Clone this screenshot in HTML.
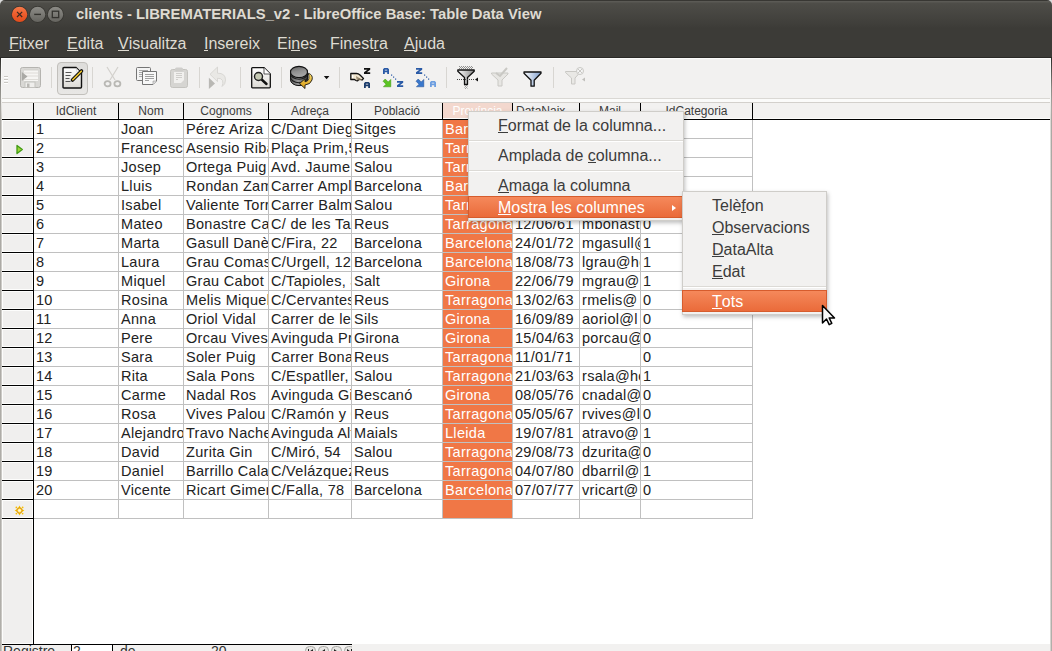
<!DOCTYPE html><html><head><meta charset="utf-8"><style>*{margin:0;padding:0;box-sizing:border-box}
html,body{width:1052px;height:651px;overflow:hidden;background:#dcdcdc}
body{font-family:"Liberation Sans",sans-serif;position:relative}
#win{position:absolute;left:0;top:0;width:1052px;height:651px;overflow:hidden;background:linear-gradient(transparent 0,transparent 28px,#fff 28px)}
.abs{position:absolute}
#titlebar{position:absolute;left:0;top:0;width:1052px;height:28px;background:linear-gradient(#383733 0px,#383733 1px,#5c5b56 1px,#5a5954 2px,#4e4d48 3px,#3e3d39 26px,#3c3b37 28px);border-radius:5px 5px 0 0}
#menubar{position:absolute;left:0;top:28px;width:1052px;height:30px;background:#3c3b37;border-bottom:1px solid #2a2926}
.wbtn{position:absolute;top:7px;width:16px;height:16px;border-radius:50%}
#title{position:absolute;left:76px;top:5px;font-weight:bold;font-size:14.8px;color:#dfdbd2;white-space:nowrap;line-height:18px}
.mi{position:absolute;top:35px;font-size:16px;color:#dfdbd2;line-height:18px;white-space:nowrap}
.mi u,.mt u{text-decoration:none;border-bottom:1px solid currentColor;display:inline-block;line-height:13px}
#toolbar{position:absolute;left:0;top:58px;width:1052px;height:40px;background:#f2f1f0;border-top:1px solid #fbfbfa}
.tsep{position:absolute;top:67px;width:1px;height:21px;background:#d5d3cf}
.ico{position:absolute}
#hsep1{position:absolute;left:0;top:98px;width:1052px;height:1px;background:#dad8d4}
#hsep2{position:absolute;left:0;top:99px;width:1052px;height:3px;background:#fbfbfa}
#hsep3{position:absolute;left:0;top:102px;width:1052px;height:1px;background:#d3d0cc}
#lborder{position:absolute;left:0;top:58px;width:1px;height:593px;background:linear-gradient(#2c2b28 0px,#8a8984 30px,#aaa8a3 50px,#b1afaa 100%)}
#lborder2{position:absolute;left:1px;top:58px;width:1px;height:593px;background:linear-gradient(#fbfbfa 0px,#f4f3f1 40px,#cfcdc9 60px,#c9c7c3 100%)}
#rborder{position:absolute;left:1051px;top:58px;width:1px;height:593px;background:linear-gradient(#2c2b28 0px,#8a8984 30px,#aaa8a3 50px,#b1afaa 100%)}
#rborder2{position:absolute;left:1050px;top:58px;width:1px;height:593px;background:linear-gradient(#fbfbfa 0px,#f4f3f1 40px,#dcdad6 60px,#d6d4d0 100%)}
.hdrbg{position:absolute;left:2px;top:103px;width:1048px;height:16px;background:#f2f1f0}
.hd{position:absolute;top:103px;height:16px;line-height:16px;font-size:12px;text-align:center;color:#3c3c3c;overflow:hidden;white-space:nowrap}
.hd.left{text-align:left;padding-left:3px}
.hd.sel{background:#f3d8ce;color:#fff}
.vl{position:absolute;width:1px}
.vl.blk{top:103px;height:17px;background:#000}
.vl.gry{top:120px;height:399px;background:#c0c0c0}
.hline{position:absolute;left:2px;top:119px;width:1048px;height:1px;background:#000}
.c{position:absolute;height:18px;line-height:18px;font-size:14.5px;letter-spacing:0.3px;padding-left:2px;overflow:hidden;white-space:nowrap;color:#222;background:#fff}
.c.sel{background:#f07746;color:#fff}
.hc{position:absolute;left:2px;width:31px;height:18px;background:#f0efee;border:1px solid #fdfdfc}
.rl{position:absolute;left:34px;width:718px;height:1px;background:#c0c0c0}
.hl{position:absolute;left:2px;width:31px;height:1px;background:#000}
#hcol{position:absolute;left:2px;top:120px;width:31px;height:524px;background:#f0efee}
#hcolline{position:absolute;left:33px;top:103px;width:1px;height:541px;background:#000}
#navline{position:absolute;left:2px;top:644px;width:350px;height:1px;background:#000}
#navbg{position:absolute;left:2px;top:644px;width:1048px;height:7px;background:#f2f1f0}
.menu{position:absolute;background:#f2f1f0;border:1px solid #cfcdc9;box-shadow:1px 2px 4px rgba(0,0,0,.25)}
.mt{position:absolute;font-size:16px;color:#3c3c3c;white-space:nowrap;line-height:18px}
.msep{position:absolute;height:2px;border-top:1px solid #dcdad6;border-bottom:1px solid #fff}
.mhl{position:absolute;background:linear-gradient(#f5895b,#ea6b3a);border:1px solid #d65c2d}

.navt{top:-2px;font-size:14px;line-height:16px;color:#333;white-space:nowrap}
</style></head><body><div id="win">
<div id="titlebar"></div>
<svg class="abs" style="left:0;top:0" width="80" height="28">
<defs>
<linearGradient id="gc" x1="0" y1="0" x2="0" y2="1"><stop offset="0" stop-color="#f47a4a"/><stop offset=".5" stop-color="#ee5c2c"/><stop offset="1" stop-color="#e04c1c"/></linearGradient>
<linearGradient id="gg" x1="0" y1="0" x2="0" y2="1"><stop offset="0" stop-color="#8c8b86"/><stop offset=".5" stop-color="#7a7974"/><stop offset="1" stop-color="#64635e"/></linearGradient>
</defs>
<circle cx="19.6" cy="14.4" r="8.4" fill="#35342f"/>
<circle cx="19.6" cy="14.4" r="7.7" fill="url(#gc)"/>
<path d="M17 11.8 L22.2 17 M22.2 11.8 L17 17" stroke="#3a2a22" stroke-width="1.2"/>
<circle cx="37.6" cy="14.4" r="8.4" fill="#35342f"/>
<circle cx="37.6" cy="14.4" r="7.7" fill="url(#gg)"/>
<path d="M34.2 14.4 H41" stroke="#34332f" stroke-width="1.4"/>
<circle cx="55.5" cy="14.4" r="8.4" fill="#35342f"/>
<circle cx="55.5" cy="14.4" r="7.7" fill="url(#gg)"/>
<rect x="52.3" y="11.2" width="6.4" height="6.4" fill="none" stroke="#34332f" stroke-width="1.3"/>
</svg>
<div id="title">clients - LIBREMATERIALS_v2 - LibreOffice Base: Table Data View</div>
<div id="menubar"></div>
<div class="mi" style="left:9px"><u>F</u>itxer</div>
<div class="mi" style="left:67px"><u>E</u>dita</div>
<div class="mi" style="left:118px"><u>V</u>isualitza</div>
<div class="mi" style="left:204px"><u>I</u>nsereix</div>
<div class="mi" style="left:277px">Ei<u>n</u>es</div>
<div class="mi" style="left:330px">Finest<u>r</u>a</div>
<div class="mi" style="left:404px"><u>A</u>juda</div>
<div id="toolbar"></div>
<svg class="abs" style="left:0;top:58px" width="600" height="40">
<defs>
<linearGradient id="docg" x1="0" y1="0" x2="0" y2="1"><stop offset="0" stop-color="#ffffff"/><stop offset="1" stop-color="#dcdad5"/></linearGradient>
<linearGradient id="btng" x1="0" y1="0" x2="0" y2="1"><stop offset="0" stop-color="#dedddb"/><stop offset="1" stop-color="#e8e7e5"/></linearGradient>
<linearGradient id="dbg" x1="0" y1="0" x2="1" y2="0"><stop offset="0" stop-color="#5a5a5a"/><stop offset=".45" stop-color="#9a9a9a"/><stop offset="1" stop-color="#3c3c3c"/></linearGradient>
<linearGradient id="fung" x1="0" y1="0" x2="1" y2="0"><stop offset="0" stop-color="#ffffff"/><stop offset="1" stop-color="#7f9fcf"/></linearGradient>
<linearGradient id="fung2" x1="0" y1="0" x2="1" y2="0"><stop offset="0" stop-color="#ffffff"/><stop offset="1" stop-color="#8a8a8a"/></linearGradient>
</defs>
<!-- grip y offsets relative to 58 -->
<g fill="#c9c7c2"><rect x="4" y="18" width="4" height="1"/><rect x="4" y="21" width="4" height="1"/><rect x="4" y="24" width="4" height="1"/></g>
<g fill="#ffffff"><rect x="4" y="19" width="4" height="1"/><rect x="4" y="22" width="4" height="1"/><rect x="4" y="25" width="4" height="1"/></g>
<!-- save disabled -->
<g transform="translate(20,9)">
<rect x="0.5" y="0.5" width="20" height="20" rx="2" fill="#d9d8d5" stroke="#b5b4b0"/>
<rect x="4" y="2" width="14" height="12" fill="#f6f5f3"/>
<rect x="4" y="2" width="14" height="1.5" fill="#d4d3cf"/>
<rect x="4" y="5.5" width="14" height="1" fill="#dedcd8"/>
<rect x="4" y="8.5" width="14" height="1" fill="#dedcd8"/>
<rect x="4" y="12" width="14" height="1" fill="#dedcd8"/>
<path d="M1.8 5 L7.5 9.5 L1.8 14 Z" fill="#aaa9a5"/>
<rect x="5" y="15" width="10" height="5.5" fill="#efeeec" stroke="#c4c3bf" stroke-width="1"/>
<rect x="7" y="16.5" width="2.5" height="4" fill="#b9b8b4"/>
</g>
<rect x="51" y="9" width="1" height="21" fill="#d8d6d2"/>
<!-- pressed button -->
<rect x="57.5" y="4.5" width="30" height="32" rx="3.5" fill="url(#btng)" stroke="#c2c0bc"/>
<!-- edit doc -->
<g transform="translate(62,9)">
<path d="M1 1.5 Q1 0.5 2 0.5 H14 L19.5 6 V20 Q19.5 21 18.5 21 H2 Q1 21 1 20 Z" fill="url(#docg)" stroke="#111" stroke-width="1.4"/>
<g fill="#555"><rect x="3.5" y="5" width="6" height="1"/><rect x="3.5" y="8" width="5" height="1"/><rect x="3.5" y="11" width="4" height="1"/><rect x="3.5" y="14" width="5" height="1"/></g>
<path d="M14 1 L19 6 L15 5 Z" fill="#fff" stroke="#bbb" stroke-width=".5"/><path d="M10.5 13 L19.5 4" stroke="#111" stroke-width="3.6" stroke-linecap="round"/><path d="M10.8 12.7 L19.3 4.2" stroke="#f2c82a" stroke-width="1.6" stroke-linecap="round"/>
</g>
<rect x="92" y="9" width="1" height="21" fill="#d8d6d2"/>
<!-- scissors disabled -->
<g transform="translate(104,9)" fill="none">
<path d="M3 0 L11 13 M14 0 L6 13" stroke="#d2d0cc" stroke-width="1.2"/>
<ellipse cx="3.6" cy="16.8" rx="3" ry="2.6" stroke="#b9b8b4" stroke-width="1.8"/><ellipse cx="13.4" cy="16.8" rx="3" ry="2.6" stroke="#b9b8b4" stroke-width="1.8"/>
</g>
<!-- copy -->
<g transform="translate(136,9)">
<rect x="0.5" y="0.5" width="14" height="13" rx="1" fill="#f4f4f4" stroke="#757575"/>
<g fill="#a8a8a8"><rect x="3" y="3" width="9" height="1"/><rect x="3" y="5" width="9" height="1"/><rect x="3" y="7" width="9" height="1"/><rect x="3" y="9" width="5" height="1"/></g>
<path d="M6.5 4.5 H20.5 V14 L17 17.5 H6.5 Z" fill="#f8f8f8" stroke="#757575"/>
<path d="M17 17.5 V14 H20.5" fill="#ddd" stroke="#999" stroke-width=".6"/>
<g fill="#a0a0a0"><rect x="9" y="7" width="9" height="1"/><rect x="9" y="9" width="9" height="1"/><rect x="9" y="11" width="9" height="1"/><rect x="9" y="13" width="4" height="1"/></g>
</g>
<!-- paste disabled -->
<g transform="translate(170,9)">
<rect x="0.5" y="2.5" width="17" height="18" rx="2" fill="#d6d5d2" stroke="#c4c3bf"/>
<rect x="5" y="0.5" width="8" height="4" rx="1.5" fill="#cfcecb"/>
<path d="M4 5 H14 V13 L11 16 H4 Z" fill="#f1f0ee"/>
<g fill="#cfcecb"><rect x="6" y="6" width="6" height="1"/><rect x="6" y="8" width="6" height="1"/><rect x="6" y="10" width="6" height="1"/><rect x="6" y="12" width="2" height="1"/></g>
</g>
<rect x="199" y="9" width="1" height="21" fill="#d8d6d2"/>
<!-- undo disabled -->
<g transform="translate(208,9)">
<path d="M0.9 10.8 L7 16.4 L0.9 21.9 Z" fill="#b9b8b4"/>
<path d="M2 7.3 L9.5 0 V6.2 Q17.5 6 17.5 13 Q17.5 17.5 14 19.5 Q15.5 16 14.5 13.5 Q13.5 11.2 9.5 11.2 V14.6 Z" fill="#e9e8e5" stroke="#d3d2ce" stroke-width="0.8" stroke-linejoin="round"/>
</g>
<rect x="240" y="9" width="1" height="21" fill="#d8d6d2"/>
<!-- search doc -->
<g transform="translate(251,9)">
<path d="M0.7 1.5 Q0.7 0.7 1.5 0.7 H13 L19.3 7 V20 Q19.3 20.8 18.5 20.8 H1.5 Q0.7 20.8 0.7 20 Z" fill="url(#docg)" stroke="#111" stroke-width="1.3"/>
<path d="M13 0.7 V7 H19.3" fill="#fff" stroke="#333" stroke-width="0.8"/>
<path d="M9 11 L15.5 17" stroke="#111" stroke-width="2.4" stroke-linecap="round"/>
<circle cx="7.5" cy="9.5" r="4" fill="#c7cbb5" stroke="#222" stroke-width="1.4"/>
</g>
<rect x="281" y="9" width="1" height="21" fill="#d8d6d2"/>
<!-- database -->
<defs>
<linearGradient id="dbtop" x1="0" y1="0" x2="0.3" y2="1"><stop offset="0" stop-color="#5e5e5e"/><stop offset=".5" stop-color="#8e8e8e"/><stop offset="1" stop-color="#a8a8a8"/></linearGradient>
<linearGradient id="arrg" x1="0" y1="0" x2="0" y2="1"><stop offset="0" stop-color="#f8dc70"/><stop offset="1" stop-color="#d89a10"/></linearGradient>
</defs>
<g transform="translate(290,8)">
<path d="M0.5 6 V13.8 A8.5 5.8 0 0 0 17.5 13.8 V6 Z" fill="url(#dbg)" stroke="#111" stroke-width="1"/>
<path d="M0.5 7.4 A8.5 5.8 0 0 0 17.5 7.4 M0.5 10.9 A8.5 5.8 0 0 0 17.5 10.9" fill="none" stroke="#1a1a1a" stroke-width="1.1"/>
<ellipse cx="9" cy="6" rx="8.5" ry="5.6" fill="url(#dbtop)" stroke="#111" stroke-width="1.1"/>
<path d="M18.2 7.2 Q23.5 9 22 14 Q20.5 18.5 15 19 L15 22.5 L9.6 17.6 L15 12.8 L15 15.8 Q18.2 15.4 18.8 12.6 Q19.3 10 18.2 7.2 Z" fill="url(#arrg)" stroke="#1a1a1a" stroke-width="0.9" stroke-linejoin="round"/>
</g>
<path d="M323.8 76 H329.4 L326.6 79.2 Z" transform="translate(0,-58)" fill="#111"/>
<rect x="339" y="9" width="1" height="21" fill="#d8d6d2"/>
<!-- sort -->
<defs>
<path id="lA" d="M0 6 V1.2 L1.2 0 H4.8 L6 1.2 V6 H4.2 V4.2 H1.8 V6 Z M1.8 1.8 V2.6 H4.2 V1.8 Z" fill-rule="evenodd"/>
<path id="lZ" d="M0 0 H6.2 V1.8 L2.8 4.2 H6.2 V6 H0 V4.2 L3.4 1.8 H0 Z"/>
<path id="arr" d="M0 2.2 L2.2 0 L5.2 3 L7.8 0.4 V7.8 H0.4 L3 5.2 Z"/>
</defs>
<g transform="translate(350,10)">
<path d="M0.8 5.5 H6.5 Q8.5 5.5 10 7 L13.5 10.5 L12 12 L9 11 Q8 13.5 6 12.5 L4.5 11.5 H0.8 Z" fill="#f1e6cf" stroke="#111" stroke-width="1.3" stroke-linejoin="round"/>
<rect x="2" y="7" width="1.3" height="3" fill="#fff"/>
<path d="M6 8 L12.5 12 L9 12.5 L6.5 11.5 Z" fill="#8a7a60" opacity=".8"/>
<use href="#lZ" x="14" y="0" fill="#111"/>
<use href="#lA" x="14" y="14" fill="#1c3c6c"/>
</g>
<!-- sort az -->
<g transform="translate(383,10)">
<use href="#lA" x="0" y="0" fill="#2a5aa6"/>
<use href="#arr" x="0" y="11" fill="#5cc422" stroke="#3a9010" stroke-width="0.5"/>
<g fill="#2a5aa6"><rect x="8" y="6.5" width="1.2" height="1.2"/><rect x="10" y="8.5" width="1.2" height="1.2"/><rect x="12" y="10.5" width="1.2" height="1.2"/></g>
<use href="#lZ" x="14" y="13" fill="#2a5aa6"/>
</g>
<!-- sort za -->
<g transform="translate(416,10)">
<use href="#lZ" x="0" y="0" fill="#2a5aa6"/>
<use href="#arr" x="0" y="11" fill="#3a78cc" stroke="#1e4a90" stroke-width="0.5"/>
<g fill="#2a5aa6"><rect x="8" y="6.5" width="1.2" height="1.2"/><rect x="10" y="8.5" width="1.2" height="1.2"/><rect x="12" y="10.5" width="1.2" height="1.2"/></g>
<use href="#lA" x="14" y="13" fill="#6d9ee0"/>
</g>
<rect x="446" y="9" width="1" height="21" fill="#d8d6d2"/>
<!-- autofilter -->
<defs><pattern id="chk" width="2" height="2" patternUnits="userSpaceOnUse"><rect width="1" height="1" fill="#666"/><rect x="1" y="1" width="1" height="1" fill="#666"/></pattern></defs>
<g transform="translate(457,8)">
<rect x="2" y="0" width="14" height="3" fill="url(#chk)" opacity=".7"/>
<path d="M0.8 4 H17.2 V5.2 L10.5 11.5 V18.5 H7.5 V11.5 L0.8 5.2 Z" fill="url(#fung2)" stroke="#111" stroke-width="1.3" stroke-linejoin="round"/>
<path d="M0 13.5 H17" stroke="#444" stroke-width="1" stroke-dasharray="1 1"/>
<path d="M21 11.5 L18 13.5 L21 15.5 Z" fill="#111"/>
<rect x="7.5" y="19" width="3" height="4" fill="url(#chk)" opacity=".6"/>
</g>
<!-- disabled filter -->
<g transform="translate(491,9)">
<path d="M0.5 6 H17 V7 L11 13 V19 H7 V13 L0.5 7 Z" fill="#e7e6e3" stroke="#c9c8c4" stroke-width="1"/>
<path d="M5 6 L9 9 L16 1" stroke="#c9c8c4" stroke-width="2" fill="none"/>
</g>
<!-- standard filter -->
<g transform="translate(523,13)">
<path d="M1 1 H18 V2.2 L11.2 9.3 V15.2 H8 V9.3 L1 2.2 Z" fill="url(#fung)" stroke="#111" stroke-width="1.3" stroke-linejoin="round"/>
</g>
<rect x="553" y="9" width="1" height="21" fill="#d8d6d2"/>
<!-- remove filter disabled -->
<g transform="translate(565,10)">
<path d="M0.5 3.5 H15 V4.5 L10 10 V16 H6.5 V10 L0.5 4.5 Z" fill="#e9e8e5" stroke="#c9c8c4" stroke-width="1"/>
<circle cx="15" cy="3" r="3.5" fill="#f5f5f5" stroke="#c9c8c4"/>
<path d="M13 1 L17 5 M17 1 L13 5" stroke="#c9c8c4" stroke-width="1"/>
<path d="M20 9.5 L17 11.5 L20 13.5 Z" fill="#c0bfbb"/>
</g>
</svg>
<div id="hsep1"></div><div id="hsep2"></div><div id="hsep3"></div>
<div id="lborder"></div><div id="lborder2"></div><div id="rborder"></div><div id="rborder2"></div>
<div id="hcol"></div><div id="hcolline"></div>
<div id="navbg"></div><div id="navline"></div>
<div class="abs" style="left:2px;top:645px;width:350px;height:6px;overflow:hidden">
<div class="abs" style="left:0;top:0;width:69px;height:6px;background:#f0efee"></div>
<div class="abs" style="left:69px;top:0;width:1px;height:6px;background:#000"></div>
<div class="abs" style="left:70px;top:0;width:40px;height:6px;background:#fff"></div>
<div class="abs" style="left:110px;top:0;width:1px;height:6px;background:#000"></div>
<div class="abs navt" style="left:1px">Registre</div>
<div class="abs navt" style="left:71px">2</div>
<div class="abs navt" style="left:118px">de</div>
<div class="abs navt" style="left:209px">20</div>
<svg class="abs" style="left:303px;top:1px" width="47" height="12">
<g fill="#e6e5e2" stroke="#a9a8a4" stroke-width="1"><rect x="0.5" y="0.5" width="10" height="10" rx="4"/><rect x="13.5" y="0.5" width="10" height="10" rx="4"/><rect x="26.5" y="0.5" width="10" height="10" rx="4"/><rect x="39.5" y="0.5" width="10" height="10" rx="4"/></g>
<g fill="#222"><rect x="3" y="3" width="1" height="5"/><path d="M8 3 L4.5 5.5 L8 8 Z"/><path d="M20 3 L16.5 5.5 L20 8 Z"/><path d="M29 3 L32.5 5.5 L29 8 Z"/><path d="M42 3 L45.5 5.5 L42 8 Z"/><rect x="46" y="3" width="1" height="5"/></g>
</svg>
</div>

<div id="grid"><div class="hdrbg"></div><div class="hd" style="left:34px;width:84px">IdClient</div><div class="hd" style="left:119px;width:64px">Nom</div><div class="hd" style="left:184px;width:84px">Cognoms</div><div class="hd" style="left:269px;width:82px">Adreça</div><div class="hd" style="left:352px;width:90px">Població</div><div class="hd sel" style="left:443px;width:69px">Província</div><div class="hd left" style="left:513px;width:66px">DataNaix</div><div class="hd" style="left:580px;width:60px">Mail</div><div class="hd" style="left:641px;width:111px">IdCategoria</div><div class="abs" style="left:2px;top:118px;width:1048px;height:1px;background:#fcfcfb"></div><div class="vl blk" style="left:33px"></div><div class="vl blk" style="left:118px"></div><div class="vl blk" style="left:183px"></div><div class="vl blk" style="left:268px"></div><div class="vl blk" style="left:351px"></div><div class="vl blk" style="left:442px"></div><div class="vl blk" style="left:512px"></div><div class="vl blk" style="left:579px"></div><div class="vl blk" style="left:640px"></div><div class="vl blk" style="left:752px"></div><div class="hline"></div><div class="c" style="left:34px;top:120px;width:84px">1</div><div class="c" style="left:119px;top:120px;width:64px">Joan</div><div class="c" style="left:184px;top:120px;width:84px">Pérez Ariza</div><div class="c" style="left:269px;top:120px;width:82px">C/Dant Diego</div><div class="c" style="left:352px;top:120px;width:90px">Sitges</div><div class="c sel" style="left:443px;top:120px;width:69px">Barcelona</div><div class="c" style="left:513px;top:120px;width:66px"></div><div class="c" style="left:580px;top:120px;width:60px"></div><div class="c" style="left:641px;top:120px;width:111px"></div><div class="hc" style="top:120px"></div><div class="rl" style="top:138px"></div><div class="hl" style="top:138px"></div><div class="c" style="left:34px;top:139px;width:84px">2</div><div class="c" style="left:119px;top:139px;width:64px">Francesc</div><div class="c" style="left:184px;top:139px;width:84px">Asensio Ribas</div><div class="c" style="left:269px;top:139px;width:82px">Plaça Prim,5</div><div class="c" style="left:352px;top:139px;width:90px">Reus</div><div class="c sel" style="left:443px;top:139px;width:69px">Tarragona</div><div class="c" style="left:513px;top:139px;width:66px"></div><div class="c" style="left:580px;top:139px;width:60px"></div><div class="c" style="left:641px;top:139px;width:111px"></div><div class="hc" style="top:139px"></div><div class="rl" style="top:157px"></div><div class="hl" style="top:157px"></div><div class="c" style="left:34px;top:158px;width:84px">3</div><div class="c" style="left:119px;top:158px;width:64px">Josep</div><div class="c" style="left:184px;top:158px;width:84px">Ortega Puig</div><div class="c" style="left:269px;top:158px;width:82px">Avd. Jaume I</div><div class="c" style="left:352px;top:158px;width:90px">Salou</div><div class="c sel" style="left:443px;top:158px;width:69px">Tarragona</div><div class="c" style="left:513px;top:158px;width:66px"></div><div class="c" style="left:580px;top:158px;width:60px"></div><div class="c" style="left:641px;top:158px;width:111px"></div><div class="hc" style="top:158px"></div><div class="rl" style="top:176px"></div><div class="hl" style="top:176px"></div><div class="c" style="left:34px;top:177px;width:84px">4</div><div class="c" style="left:119px;top:177px;width:64px">Lluis</div><div class="c" style="left:184px;top:177px;width:84px">Rondan Zamora</div><div class="c" style="left:269px;top:177px;width:82px">Carrer Ample</div><div class="c" style="left:352px;top:177px;width:90px">Barcelona</div><div class="c sel" style="left:443px;top:177px;width:69px">Barcelona</div><div class="c" style="left:513px;top:177px;width:66px"></div><div class="c" style="left:580px;top:177px;width:60px"></div><div class="c" style="left:641px;top:177px;width:111px"></div><div class="hc" style="top:177px"></div><div class="rl" style="top:195px"></div><div class="hl" style="top:195px"></div><div class="c" style="left:34px;top:196px;width:84px">5</div><div class="c" style="left:119px;top:196px;width:64px">Isabel</div><div class="c" style="left:184px;top:196px;width:84px">Valiente Torres</div><div class="c" style="left:269px;top:196px;width:82px">Carrer Balmes</div><div class="c" style="left:352px;top:196px;width:90px">Salou</div><div class="c sel" style="left:443px;top:196px;width:69px">Tarragona</div><div class="c" style="left:513px;top:196px;width:66px"></div><div class="c" style="left:580px;top:196px;width:60px"></div><div class="c" style="left:641px;top:196px;width:111px"></div><div class="hc" style="top:196px"></div><div class="rl" style="top:214px"></div><div class="hl" style="top:214px"></div><div class="c" style="left:34px;top:215px;width:84px">6</div><div class="c" style="left:119px;top:215px;width:64px">Mateo</div><div class="c" style="left:184px;top:215px;width:84px">Bonastre Casas</div><div class="c" style="left:269px;top:215px;width:82px">C/ de les Tapies</div><div class="c" style="left:352px;top:215px;width:90px">Reus</div><div class="c sel" style="left:443px;top:215px;width:69px">Tarragona</div><div class="c" style="left:513px;top:215px;width:66px">12/06/61</div><div class="c" style="left:580px;top:215px;width:60px">mbonastre</div><div class="c" style="left:641px;top:215px;width:111px">0</div><div class="hc" style="top:215px"></div><div class="rl" style="top:233px"></div><div class="hl" style="top:233px"></div><div class="c" style="left:34px;top:234px;width:84px">7</div><div class="c" style="left:119px;top:234px;width:64px">Marta</div><div class="c" style="left:184px;top:234px;width:84px">Gasull Danès</div><div class="c" style="left:269px;top:234px;width:82px">C/Fira, 22</div><div class="c" style="left:352px;top:234px;width:90px">Barcelona</div><div class="c sel" style="left:443px;top:234px;width:69px">Barcelona</div><div class="c" style="left:513px;top:234px;width:66px">24/01/72</div><div class="c" style="left:580px;top:234px;width:60px">mgasull@</div><div class="c" style="left:641px;top:234px;width:111px">1</div><div class="hc" style="top:234px"></div><div class="rl" style="top:252px"></div><div class="hl" style="top:252px"></div><div class="c" style="left:34px;top:253px;width:84px">8</div><div class="c" style="left:119px;top:253px;width:64px">Laura</div><div class="c" style="left:184px;top:253px;width:84px">Grau Comas</div><div class="c" style="left:269px;top:253px;width:82px">C/Urgell, 12</div><div class="c" style="left:352px;top:253px;width:90px">Barcelona</div><div class="c sel" style="left:443px;top:253px;width:69px">Barcelona</div><div class="c" style="left:513px;top:253px;width:66px">18/08/73</div><div class="c" style="left:580px;top:253px;width:60px">lgrau@hot</div><div class="c" style="left:641px;top:253px;width:111px">1</div><div class="hc" style="top:253px"></div><div class="rl" style="top:271px"></div><div class="hl" style="top:271px"></div><div class="c" style="left:34px;top:272px;width:84px">9</div><div class="c" style="left:119px;top:272px;width:64px">Miquel</div><div class="c" style="left:184px;top:272px;width:84px">Grau Cabot</div><div class="c" style="left:269px;top:272px;width:82px">C/Tapioles, 3</div><div class="c" style="left:352px;top:272px;width:90px">Salt</div><div class="c sel" style="left:443px;top:272px;width:69px">Girona</div><div class="c" style="left:513px;top:272px;width:66px">22/06/79</div><div class="c" style="left:580px;top:272px;width:60px">mgrau@</div><div class="c" style="left:641px;top:272px;width:111px">1</div><div class="hc" style="top:272px"></div><div class="rl" style="top:290px"></div><div class="hl" style="top:290px"></div><div class="c" style="left:34px;top:291px;width:84px">10</div><div class="c" style="left:119px;top:291px;width:64px">Rosina</div><div class="c" style="left:184px;top:291px;width:84px">Melis Miquel</div><div class="c" style="left:269px;top:291px;width:82px">C/Cervantes</div><div class="c" style="left:352px;top:291px;width:90px">Reus</div><div class="c sel" style="left:443px;top:291px;width:69px">Tarragona</div><div class="c" style="left:513px;top:291px;width:66px">13/02/63</div><div class="c" style="left:580px;top:291px;width:60px">rmelis@</div><div class="c" style="left:641px;top:291px;width:111px">0</div><div class="hc" style="top:291px"></div><div class="rl" style="top:309px"></div><div class="hl" style="top:309px"></div><div class="c" style="left:34px;top:310px;width:84px">11</div><div class="c" style="left:119px;top:310px;width:64px">Anna</div><div class="c" style="left:184px;top:310px;width:84px">Oriol Vidal</div><div class="c" style="left:269px;top:310px;width:82px">Carrer de les</div><div class="c" style="left:352px;top:310px;width:90px">Sils</div><div class="c sel" style="left:443px;top:310px;width:69px">Girona</div><div class="c" style="left:513px;top:310px;width:66px">16/09/89</div><div class="c" style="left:580px;top:310px;width:60px">aoriol@l</div><div class="c" style="left:641px;top:310px;width:111px">0</div><div class="hc" style="top:310px"></div><div class="rl" style="top:328px"></div><div class="hl" style="top:328px"></div><div class="c" style="left:34px;top:329px;width:84px">12</div><div class="c" style="left:119px;top:329px;width:64px">Pere</div><div class="c" style="left:184px;top:329px;width:84px">Orcau Vives</div><div class="c" style="left:269px;top:329px;width:82px">Avinguda Prat</div><div class="c" style="left:352px;top:329px;width:90px">Girona</div><div class="c sel" style="left:443px;top:329px;width:69px">Girona</div><div class="c" style="left:513px;top:329px;width:66px">15/04/63</div><div class="c" style="left:580px;top:329px;width:60px">porcau@</div><div class="c" style="left:641px;top:329px;width:111px">0</div><div class="hc" style="top:329px"></div><div class="rl" style="top:347px"></div><div class="hl" style="top:347px"></div><div class="c" style="left:34px;top:348px;width:84px">13</div><div class="c" style="left:119px;top:348px;width:64px">Sara</div><div class="c" style="left:184px;top:348px;width:84px">Soler Puig</div><div class="c" style="left:269px;top:348px;width:82px">Carrer Bonaire</div><div class="c" style="left:352px;top:348px;width:90px">Reus</div><div class="c sel" style="left:443px;top:348px;width:69px">Tarragona</div><div class="c" style="left:513px;top:348px;width:66px">11/01/71</div><div class="c" style="left:580px;top:348px;width:60px"></div><div class="c" style="left:641px;top:348px;width:111px">0</div><div class="hc" style="top:348px"></div><div class="rl" style="top:366px"></div><div class="hl" style="top:366px"></div><div class="c" style="left:34px;top:367px;width:84px">14</div><div class="c" style="left:119px;top:367px;width:64px">Rita</div><div class="c" style="left:184px;top:367px;width:84px">Sala Pons</div><div class="c" style="left:269px;top:367px;width:82px">C/Espatller, 4</div><div class="c" style="left:352px;top:367px;width:90px">Salou</div><div class="c sel" style="left:443px;top:367px;width:69px">Tarragona</div><div class="c" style="left:513px;top:367px;width:66px">21/03/63</div><div class="c" style="left:580px;top:367px;width:60px">rsala@hot</div><div class="c" style="left:641px;top:367px;width:111px">1</div><div class="hc" style="top:367px"></div><div class="rl" style="top:385px"></div><div class="hl" style="top:385px"></div><div class="c" style="left:34px;top:386px;width:84px">15</div><div class="c" style="left:119px;top:386px;width:64px">Carme</div><div class="c" style="left:184px;top:386px;width:84px">Nadal Ros</div><div class="c" style="left:269px;top:386px;width:82px">Avinguda Girona</div><div class="c" style="left:352px;top:386px;width:90px">Bescanó</div><div class="c sel" style="left:443px;top:386px;width:69px">Girona</div><div class="c" style="left:513px;top:386px;width:66px">08/05/76</div><div class="c" style="left:580px;top:386px;width:60px">cnadal@</div><div class="c" style="left:641px;top:386px;width:111px">0</div><div class="hc" style="top:386px"></div><div class="rl" style="top:404px"></div><div class="hl" style="top:404px"></div><div class="c" style="left:34px;top:405px;width:84px">16</div><div class="c" style="left:119px;top:405px;width:64px">Rosa</div><div class="c" style="left:184px;top:405px;width:84px">Vives Palou</div><div class="c" style="left:269px;top:405px;width:82px">C/Ramón y Cajal</div><div class="c" style="left:352px;top:405px;width:90px">Reus</div><div class="c sel" style="left:443px;top:405px;width:69px">Tarragona</div><div class="c" style="left:513px;top:405px;width:66px">05/05/67</div><div class="c" style="left:580px;top:405px;width:60px">rvives@l</div><div class="c" style="left:641px;top:405px;width:111px">0</div><div class="hc" style="top:405px"></div><div class="rl" style="top:423px"></div><div class="hl" style="top:423px"></div><div class="c" style="left:34px;top:424px;width:84px">17</div><div class="c" style="left:119px;top:424px;width:64px">Alejandro</div><div class="c" style="left:184px;top:424px;width:84px">Travo Nacher</div><div class="c" style="left:269px;top:424px;width:82px">Avinguda Alt</div><div class="c" style="left:352px;top:424px;width:90px">Maials</div><div class="c sel" style="left:443px;top:424px;width:69px">Lleida</div><div class="c" style="left:513px;top:424px;width:66px">19/07/81</div><div class="c" style="left:580px;top:424px;width:60px">atravo@</div><div class="c" style="left:641px;top:424px;width:111px">1</div><div class="hc" style="top:424px"></div><div class="rl" style="top:442px"></div><div class="hl" style="top:442px"></div><div class="c" style="left:34px;top:443px;width:84px">18</div><div class="c" style="left:119px;top:443px;width:64px">David</div><div class="c" style="left:184px;top:443px;width:84px">Zurita Gin</div><div class="c" style="left:269px;top:443px;width:82px">C/Miró, 54</div><div class="c" style="left:352px;top:443px;width:90px">Salou</div><div class="c sel" style="left:443px;top:443px;width:69px">Tarragona</div><div class="c" style="left:513px;top:443px;width:66px">29/08/73</div><div class="c" style="left:580px;top:443px;width:60px">dzurita@</div><div class="c" style="left:641px;top:443px;width:111px">0</div><div class="hc" style="top:443px"></div><div class="rl" style="top:461px"></div><div class="hl" style="top:461px"></div><div class="c" style="left:34px;top:462px;width:84px">19</div><div class="c" style="left:119px;top:462px;width:64px">Daniel</div><div class="c" style="left:184px;top:462px;width:84px">Barrillo Calatrava</div><div class="c" style="left:269px;top:462px;width:82px">C/Velázquez</div><div class="c" style="left:352px;top:462px;width:90px">Reus</div><div class="c sel" style="left:443px;top:462px;width:69px">Tarragona</div><div class="c" style="left:513px;top:462px;width:66px">04/07/80</div><div class="c" style="left:580px;top:462px;width:60px">dbarril@</div><div class="c" style="left:641px;top:462px;width:111px">1</div><div class="hc" style="top:462px"></div><div class="rl" style="top:480px"></div><div class="hl" style="top:480px"></div><div class="c" style="left:34px;top:481px;width:84px">20</div><div class="c" style="left:119px;top:481px;width:64px">Vicente</div><div class="c" style="left:184px;top:481px;width:84px">Ricart Gimeno</div><div class="c" style="left:269px;top:481px;width:82px">C/Falla, 78</div><div class="c" style="left:352px;top:481px;width:90px">Barcelona</div><div class="c sel" style="left:443px;top:481px;width:69px">Barcelona</div><div class="c" style="left:513px;top:481px;width:66px">07/07/77</div><div class="c" style="left:580px;top:481px;width:60px">vricart@</div><div class="c" style="left:641px;top:481px;width:111px">0</div><div class="hc" style="top:481px"></div><div class="rl" style="top:499px"></div><div class="hl" style="top:499px"></div><div class="c" style="left:34px;top:500px;width:84px"></div><div class="c" style="left:119px;top:500px;width:64px"></div><div class="c" style="left:184px;top:500px;width:84px"></div><div class="c" style="left:269px;top:500px;width:82px"></div><div class="c" style="left:352px;top:500px;width:90px"></div><div class="c sel" style="left:443px;top:500px;width:69px"></div><div class="c" style="left:513px;top:500px;width:66px"></div><div class="c" style="left:580px;top:500px;width:60px"></div><div class="c" style="left:641px;top:500px;width:111px"></div><div class="hc" style="top:500px"></div><div class="rl" style="top:518px"></div><div class="hl" style="top:518px"></div><div class="vl gry" style="left:118px"></div><div class="vl gry" style="left:183px"></div><div class="vl gry" style="left:268px"></div><div class="vl gry" style="left:351px"></div><div class="vl gry" style="left:442px"></div><div class="vl gry" style="left:512px"></div><div class="vl gry" style="left:579px"></div><div class="vl gry" style="left:640px"></div><div class="vl gry" style="left:752px"></div><div class="hc" style="top:519px;height:125px"></div><svg class="abs" style="left:14px;top:143px" width="12" height="13"><path d="M3 2.5 L8.3 6.5 L3 10.5 Z" fill="#9bd53a" stroke="#3f9a12" stroke-width="1.3" stroke-linejoin="round"/></svg><svg class="abs" style="left:14px;top:505px" width="12" height="12"><g fill="#f7bf00"><path d="M5.5 0.6 L7.3 3.7 L10.4 5.5 L7.3 7.3 L5.5 10.4 L3.7 7.3 L0.6 5.5 L3.7 3.7 Z"/><circle cx="2.4" cy="2.4" r="0.9"/><circle cx="8.6" cy="2.4" r="0.9"/><circle cx="2.4" cy="8.6" r="0.9"/><circle cx="8.6" cy="8.6" r="0.9"/></g><circle cx="5.5" cy="5.5" r="2.6" fill="#ffe060" stroke="#d88a00" stroke-width="0.9"/><circle cx="5.5" cy="5.5" r="1.3" fill="#fffbe0"/></svg></div>
<div class="menu" style="left:468px;top:111px;width:216px;height:110px"></div>
<div class="mt" style="left:498px;top:117px"><u>F</u>ormat de la columna...</div>
<div class="msep" style="left:469px;top:140px;width:214px"></div>
<div class="mt" style="left:498px;top:147px">Amplada de <u>c</u>olumna...</div>
<div class="msep" style="left:469px;top:170px;width:214px"></div>
<div class="mt" style="left:498px;top:177px"><u>A</u>maga la columna</div>
<div class="mhl" style="left:468px;top:196px;width:216px;height:22px"></div>
<div class="mt" style="left:498px;top:199px;color:#fff"><u>M</u>ostra les columnes</div>
<div class="menu" style="left:682px;top:191px;width:145px;height:124px"></div>
<div class="mt" style="left:712px;top:197px">Telè<u>f</u>on</div>
<div class="mt" style="left:712px;top:219px"><u>O</u>bservacions</div>
<div class="mt" style="left:712px;top:241px"><u>D</u>ataAlta</div>
<div class="mt" style="left:712px;top:263px"><u>E</u>dat</div>
<div class="msep" style="left:683px;top:286px;width:143px"></div>
<div class="mhl" style="left:682px;top:290px;width:145px;height:22px"></div>
<div class="mt" style="left:712px;top:293px;color:#fff"><u>T</u>ots</div>
<svg class="abs" style="left:670px;top:204px" width="8" height="8"><path d="M2 1 L6 4 L2 7 Z" fill="#fff"/></svg>
<svg class="abs" style="left:818px;top:302px" width="22" height="28"><path d="M4.5 3.5 V21 L8.5 17 L11.2 22.6 L13.8 21.4 L11.2 16 H16.5 Z" fill="#f7f7f7" stroke="#000" stroke-width="1.5" stroke-linejoin="round"/></svg>

</div></body></html>
